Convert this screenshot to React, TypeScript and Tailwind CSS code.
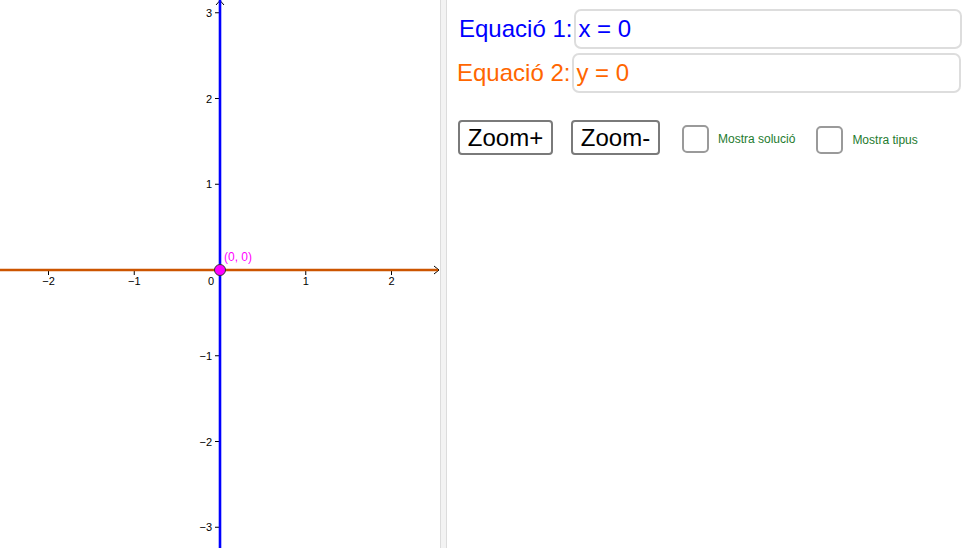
import React from "react"

const U = 85.75
const OX = 220
const OY = 270

const xTicks = [-2, -1, 1, 2]
const yTicks = [3, 2, 1, -1, -2, -3]

function label(n: number) {
  return n < 0 ? `\u2212${-n}` : `${n}`
}

function Graph() {
  return (
    <svg width={440} height={548} className="block shrink-0" style={{ fontFamily: '"Liberation Sans", Arial, sans-serif' }}>
      {/* x axis ticks + labels */}
      {xTicks.map((n) => {
        const x = OX + n * U
        return (
          <g key={`x${n}`}>
            <line x1={x} y1={OY} x2={x} y2={OY + 5} stroke="#000" strokeWidth={1} />
            <text x={x} y={OY + 15} fontSize={11} textAnchor="middle" fill="#000">
              {label(n)}
            </text>
          </g>
        )
      })}
      {yTicks.map((n) => {
        const y = OY - n * U
        return (
          <g key={`y${n}`}>
            <line x1={OX - 5} y1={y} x2={OX} y2={y} stroke="#000" strokeWidth={1} />
            <text x={OX - 8} y={y + 4} fontSize={11} textAnchor="end" fill="#000">
              {label(n)}
            </text>
          </g>
        )
      })}
      <text x={OX - 6} y={OY + 15} fontSize={11} textAnchor="end" fill="#000">
        0
      </text>

      {/* arrows */}
      <path d="M434 266 L439 270 L434 274" fill="none" stroke="#000" strokeWidth={1} />
      <path d="M216 5 L220 0.5 L224 5" fill="none" stroke="#000" strokeWidth={1} />

      {/* x = 0 (blue) */}
      <line x1={OX} y1={0} x2={OX} y2={548} stroke="#0000ff" strokeWidth={2.6} />
      {/* y = 0 (orange) */}
      <line x1={0} y1={OY} x2={438} y2={OY} stroke="#cc5500" strokeWidth={2.4} />

      {/* intersection point */}
      <circle cx={OX} cy={OY} r={5.5} fill="#ff00ff" stroke="#333" strokeWidth={1} />
      <text x={224} y={261} fontSize={12} fill="#ff00ff">
        (0, 0)
      </text>
    </svg>
  )
}

function Checkbox({ text }: { text: string }) {
  return (
    <label className="flex items-center gap-[9px]">
      <span className="block w-[27px] h-[28px] rounded-[5px] border-2 border-[#9a9a9a] bg-white" />
      <span className="text-[12px] text-[#1e7b2e]">{text}</span>
    </label>
  )
}

export default function App() {
  return (
    <div
      className="flex w-[970px] h-[548px] overflow-hidden bg-white"
      style={{ fontFamily: '"Liberation Sans", Arial, sans-serif' }}
    >
      <Graph />

      <div className="w-[7px] shrink-0 bg-[#f3f3f3] border-x border-[#dcdcdc]" />

      <div className="flex-1 flex flex-col pr-[8px]">
        <div className="flex items-center pl-[12px] mt-[9px] h-[40px]">
          <span className="text-[24px] text-[#0000ff] leading-none whitespace-nowrap">Equació 1:</span>
          <div className="ml-[2px] flex-1 h-[40px] rounded-[7px] border-2 border-[#dddddd] flex items-center px-[2px]">
            <span className="text-[24px] text-[#0000ff] leading-none">x = 0</span>
          </div>
        </div>

        <div className="flex items-center pl-[10px] mt-[4px] h-[40px]">
          <span className="text-[24px] text-[#ff6600] leading-none whitespace-nowrap">Equació 2:</span>
          <div className="ml-[2px] flex-1 h-[40px] rounded-[7px] border-2 border-[#dddddd] flex items-center px-[2px] mr-[1px]">
            <span className="text-[24px] text-[#ff6600] leading-none">y = 0</span>
          </div>
        </div>

        <div className="flex items-center pl-[11px] mt-[27px]">
          <button className="w-[95px] h-[35px] rounded-[4px] border-2 border-[#7a7a7a] bg-white text-[24px] text-black leading-none">
            Zoom+
          </button>
          <button className="ml-[18px] w-[89px] h-[35px] rounded-[4px] border-2 border-[#7a7a7a] bg-white text-[24px] text-black leading-none">
            Zoom-
          </button>
          <div className="ml-[22px] mt-[2px]">
            <Checkbox text="Mostra solució" />
          </div>
          <div className="ml-[21px] mt-[4px]">
            <Checkbox text="Mostra tipus" />
          </div>
        </div>
      </div>
    </div>
  )
}
